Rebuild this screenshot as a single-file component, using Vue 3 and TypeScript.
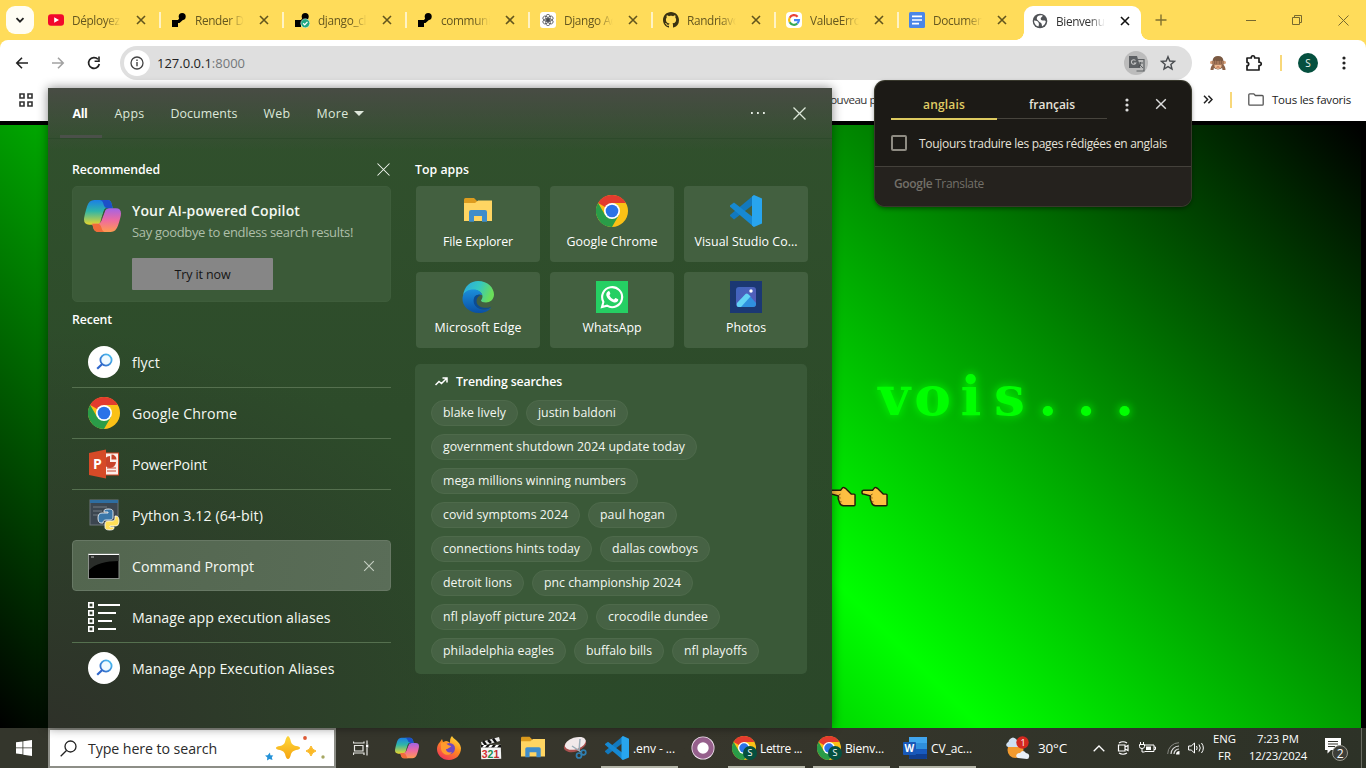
<script setup lang="ts">
interface Tab { icon: string; title: string }
interface Labeled { icon: string; label: string; width: number }
interface Chip { label: string; width: number }

// Spreads the letters of an element so its text takes the given width.
const vFit = {
  mounted(el: HTMLElement, binding: { value: number }) {
    const range = document.createRange()
    range.selectNodeContents(el)
    const natural = range.getBoundingClientRect().width
    const count = (el.textContent ?? '').trim().length
    if (natural > 0 && count > 0) {
      el.style.letterSpacing = `${((binding.value - natural) / count).toFixed(3)}px`
    }
  },
}

const tabs: Tab[] = [
  { icon: 'youtube', title: 'Déployez' },
  { icon: 'render', title: 'Render Da' },
  { icon: 'renderok', title: 'django_cl' },
  { icon: 'render', title: 'communit' },
  { icon: 'openai', title: 'Django Ad' },
  { icon: 'github', title: 'Randriavo' },
  { icon: 'google', title: 'ValueError' },
  { icon: 'gdocs', title: 'Document' },
]

const filters: Chip[] = [
  { label: 'All', width: 15 },
  { label: 'Apps', width: 30 },
  { label: 'Documents', width: 67 },
  { label: 'Web', width: 27 },
  { label: 'More', width: 32 },
]

const recents: Labeled[] = [
  { icon: 'find', label: 'flyct', width: 28 },
  { icon: 'chrome', label: 'Google Chrome', width: 105 },
  { icon: 'powerpoint', label: 'PowerPoint', width: 75 },
  { icon: 'python', label: 'Python 3.12 (64-bit)', width: 131 },
  { icon: 'cmd', label: 'Command Prompt', width: 122 },
  { icon: 'aliases', label: 'Manage app execution aliases', width: 198.5 },
  { icon: 'find', label: 'Manage App Execution Aliases', width: 202.5 },
]

const apps: Labeled[] = [
  { icon: 'folder', label: 'File Explorer', width: 70 },
  { icon: 'chrome', label: 'Google Chrome', width: 91 },
  { icon: 'vscode', label: 'Visual Studio Co...', width: 103 },
  { icon: 'edge', label: 'Microsoft Edge', width: 87 },
  { icon: 'whatsapp', label: 'WhatsApp', width: 59 },
  { icon: 'photos', label: 'Photos', width: 40 },
]

const trends: Chip[][] = [
  [{ label: 'blake lively', width: 63 }, { label: 'justin baldoni', width: 78 }],
  [{ label: 'government shutdown 2024 update today', width: 242 }],
  [{ label: 'mega millions winning numbers', width: 183 }],
  [{ label: 'covid symptoms 2024', width: 125 }, { label: 'paul hogan', width: 65 }],
  [{ label: 'connections hints today', width: 137 }, { label: 'dallas cowboys', width: 86 }],
  [{ label: 'detroit lions', width: 69 }, { label: 'pnc championship 2024', width: 137 }],
  [{ label: 'nfl playoff picture 2024', width: 133 }, { label: 'crocodile dundee', width: 100 }],
  [{ label: 'philadelphia eagles', width: 111 }, { label: 'buffalo bills', width: 66 }, { label: 'nfl playoffs', width: 63 }],
]

const pinned = ['copilot', 'firefox', 'clapper', 'folder', 'snip']
const headline = 'vois...'.split('')
</script>

<template>
  <div class="screen">
    <svg class="defs" width="0" height="0">
      <defs>
        <linearGradient id="gA" x1="0" y1="0" x2="0" y2="1"><stop offset="0" stop-color="#1b7fe6" /><stop offset=".45" stop-color="#2fb5a8" /><stop offset="1" stop-color="#e8d52c" /></linearGradient>
        <linearGradient id="gB" x1="0" y1="0" x2="0" y2="1"><stop offset="0" stop-color="#a263e6" /><stop offset=".5" stop-color="#ee6aa0" /><stop offset="1" stop-color="#ff9a50" /></linearGradient>
        <linearGradient id="gEdge" x1="0" y1="0" x2="1" y2=".3"><stop offset="0" stop-color="#2aa6e0" /><stop offset=".55" stop-color="#35c8c0" /><stop offset="1" stop-color="#6ade5a" /></linearGradient>
        <linearGradient id="gEdge2" x1="0" y1="0" x2="0" y2="1"><stop offset="0" stop-color="#1b8fdc" /><stop offset="1" stop-color="#0a50a4" /></linearGradient>
        <linearGradient id="gFind" x1="1" y1="0" x2="0" y2="1"><stop offset="0" stop-color="#4cc4f4" /><stop offset="1" stop-color="#2f5fc4" /></linearGradient>
        <linearGradient id="gFox" x1=".8" y1="0" x2=".2" y2="1"><stop offset="0" stop-color="#ffe03c" /><stop offset=".45" stop-color="#ff8a20" /><stop offset="1" stop-color="#f0305c" /></linearGradient>
        <linearGradient id="gPhoto" x1="0" y1="0" x2="1" y2="1"><stop offset="0" stop-color="#3f66bf" /><stop offset="1" stop-color="#5a5bb8" /></linearGradient>
        <linearGradient id="gStar" x1="0" y1="0" x2="0" y2="1"><stop offset="0" stop-color="#ffd93b" /><stop offset="1" stop-color="#f5a410" /></linearGradient>
      </defs>
      <symbol id="youtube" viewBox="0 0 16 16"><rect y="2.200" width="16" height="11.600" rx="3" fill="#f2082c" /><path d="M6.200 5.300v5.400L11 8z" fill="#fff" /></symbol>
      <symbol id="render" viewBox="0 0 16 16"><path d="M1 8h6v7H1zM7 8l3-4 3 3-4.500 4H7z" /><circle cx="11.200" cy="4.500" r="3.500" /></symbol>
      <symbol id="renderok" viewBox="0 0 16 16"><path d="M1 8h6v7H1zM7 8l3-4 3 3-4.500 4H7z" /><circle cx="11.200" cy="4.500" r="3.500" /><circle cx="11.300" cy="11.300" r="4.500" fill="#22a884" stroke="#fff" stroke-width=".5" /><path d="M9.200 11.300l1.500 1.600 2.800-3" fill="none" stroke="#fff" stroke-width="1.300" /></symbol>
      <symbol id="openai" viewBox="0 0 16 16"><rect width="16" height="16" rx="3" fill="#fff" /><g fill="none" stroke="#3b3e45" stroke-width=".7"><ellipse cx="8" cy="5.600" rx="2.300" ry="3.300" /><ellipse cx="8" cy="5.600" rx="2.300" ry="3.300" transform="rotate(60 8 8)" /><ellipse cx="8" cy="5.600" rx="2.300" ry="3.300" transform="rotate(120 8 8)" /><ellipse cx="8" cy="5.600" rx="2.300" ry="3.300" transform="rotate(180 8 8)" /><ellipse cx="8" cy="5.600" rx="2.300" ry="3.300" transform="rotate(240 8 8)" /><ellipse cx="8" cy="5.600" rx="2.300" ry="3.300" transform="rotate(300 8 8)" /></g></symbol>
      <symbol id="github" viewBox="0 0 16 16"><path fill="#3a3212" d="M8 0C3.580 0 0 3.580 0 8c0 3.540 2.290 6.530 5.470 7.590.4.070.55-.17.55-.38 0-.19-.01-.82-.01-1.490-2.010.37-2.530-.49-2.690-.94-.09-.23-.48-.94-.82-1.130-.28-.15-.68-.52-.01-.53.63-.01 1.080.58 1.230.82.72 1.210 1.870.87 2.330.66.07-.52.28-.87.51-1.070-1.780-.2-3.640-.89-3.640-3.950 0-.87.31-1.590.82-2.150-.08-.2-.36-1.020.08-2.120 0 0 .67-.21 2.200.82.64-.18 1.320-.27 2-.27s1.360.09 2 .27c1.530-1.040 2.200-.82 2.200-.82.44 1.100.16 1.920.08 2.120.51.56.82 1.270.82 2.150 0 3.070-1.870 3.750-3.650 3.950.29.25.54.73.54 1.480 0 1.070-.01 1.930-.01 2.200 0 .21.15.46.55.38A8.010 8.010 0 0016 8c0-4.420-3.580-8-8-8z" /></symbol>
      <symbol id="google" viewBox="0 0 16 16"><rect width="16" height="16" rx="4" fill="#fff" /><g fill="none" stroke-width="2.200"><path d="M11.600 4.700A4.900 4.900 0 0 0 3.700 5.700" stroke="#ea4335" /><path d="M3.700 5.700a4.900 4.900 0 0 0 0 4.600" stroke="#fbbc05" /><path d="M3.700 10.300a4.900 4.900 0 0 0 7.600 1.200" stroke="#34a853" /><path d="M11.300 11.500A4.900 4.900 0 0 0 12.900 8.200H8" stroke="#4285f4" /></g></symbol>
      <symbol id="gdocs" viewBox="0 0 16 16"><rect width="16" height="16" rx="1.500" fill="#4a86e8" /><path d="M3 4.300h10M3 8h10M3 11.700h7" stroke="#fff" stroke-width="1.700" /></symbol>
      <symbol id="globe" viewBox="0 0 16 16"><circle cx="8" cy="8" r="7.300" fill="#505357" /><path d="M2 7.600c2.600 0 3.900.8 4.600 2.100.6 1.200.3 2.500-.2 3.800C3.600 12.900 2 10.500 2 7.600zM6 3c1.300-.9 3.300-1.100 4.700-.4-.2 1.800-1.800 1.500-2 3-.1 1.500 1 2.200 2.600 1.900 1.400-.3 2.400.1 2.500 1.100-.4 2.200-1.800 4-3.800 4.800-.1-2-.3-3.200-1.700-3.900C6.500 8.500 6.400 7.500 5 6.600 4.500 5.200 5 3.700 6 3z" fill="#fff" /></symbol>
      <symbol id="chrome" viewBox="0 0 32 32"><circle cx="16" cy="16" r="16" fill="#fbc116" /><path d="M16 16L2.140 8A16 16 0 0 1 29.860 8z" fill="#e33b2e" /><path d="M2.140 8A16 16 0 0 0 16 32l6.900-12H9.100z" fill="#2a9c48" /><path d="M29.860 8H16l6.900 12z" fill="#fbc116" /><circle cx="16" cy="16" r="8" fill="#fff" /><circle cx="16" cy="16" r="6.300" fill="#2a73e8" /></symbol>
      <symbol id="folder" viewBox="0 0 28 28"><path d="M0 2.500Q0 1 1.500 1H10l3 3v6H0z" fill="#dd9c1e" /><path d="M0 6h11l3-2.500h14V24H0z" fill="#ffd562" /><path d="M5 24.800V15q0-2 2-2h14q2 0 2 2v9.800h-5V19h-8v5.800z" fill="#3f8dcb" /></symbol>
      <symbol id="vscode" viewBox="0 0 32 32"><path d="M24 0v9L4 24.500 0 21v-1z" fill="#1279be" /><path d="M24 32v-9L4 7.500 0 10.500v1.200z" fill="#1689d3" /><path d="M24 0l8 3.500v25L24 32l-2-1.500v-29z" fill="#28a5ee" /></symbol>
      <symbol id="edge" viewBox="0 0 32 32"><path d="M1 15C2 5 9 0 16 0c10 0 16 7 16 13.500 0 5-4 8-8 8-3 0-5-1-5-2 0-.8 1.500-1.500 1.500-4C20.500 12 17 9 12 9 6 9 2 12 1 15z" fill="url(#gEdge)" /><path d="M.5 17C1 11 6 8.500 11.500 8.500c5 0 8 2.500 8.800 5.500-5-2-9 1.500-8 7 .8 5 6 8 11 7.500 2.500-.3 4.500-1 6-2C26.500 30.500 22 32 17 32 7 32 0 25 .5 17z" fill="url(#gEdge2)" /><path d="M12 17c-2 6 3 12 11 11.500 3-.3 5-1.500 6.500-3-4 2.500-15 2-15-5.500 0-3 2-5 4-6-3-.7-5.500.5-6.500 3z" fill="#0c4b91" /></symbol>
      <symbol id="whatsapp" viewBox="0 0 32 32"><rect width="32" height="32" fill="#25cf63" /><path d="M6 26l1.400-5A10 10 0 1 1 11 24.700z" fill="none" stroke="#fff" stroke-width="2.100" /><path d="M12.300 10.200c.9-.5 1.300.2 2 2.300.2.800-.9 1.500-.8 1.900.9 1.900 2.300 3.200 4.300 4 .7 0 1.200-1.500 1.800-1.400l2.600 1.300c.5 2.300-1.900 3.600-4.200 3.100-4-1.100-6.500-3.700-7.600-6.700-.5-1.900.4-3.700 1.900-4.500z" fill="#fff" /></symbol>
      <symbol id="photos" viewBox="0 0 32 32"><rect width="32" height="32" fill="#1b3873" /><rect x="6" y="6" width="20" height="20" rx="3" fill="url(#gPhoto)" /><path d="M7 25l9-11q1.500-1.500 3 0l7 8v1q0 3-3 3H9q-1.500 0-2-1z" fill="#2f90df" /><path d="M7 22l8.500-9q1.500-1 3 .5l2 2L11 26H9q-3 0-2-4z" fill="#63d3f5" /><circle cx="21" cy="10" r="1.700" fill="#fff" /></symbol>
      <symbol id="find" viewBox="0 0 32 32"><circle cx="16" cy="16" r="16" fill="#fff" /><circle cx="18" cy="14" r="5.600" fill="#f0faff" stroke="url(#gFind)" stroke-width="1.800" /><path d="M14 18.200L9.200 22.800" stroke="#2f67cc" stroke-width="2.200" /></symbol>
      <symbol id="powerpoint" viewBox="0 0 32 32"><rect x="16" y="5" width="14.500" height="22" fill="#fbeeea" stroke="#d04423" /><path d="M22 8v6h6a6 6 0 1 1-6-6z" fill="#c8432a" /><path d="M23.500 6.500a5 5 0 0 1 5 5h-5z" fill="#c8432a" /><path d="M19 20h9M19 23h9" stroke="#c8432a" stroke-width="1.200" /><path d="M1 5l17-3.500v29L1 27z" fill="#d64a27" /><text x="5" y="21" class="pp-letter">P</text></symbol>
      <symbol id="python" viewBox="0 0 32 32"><rect x="2" y="1" width="28" height="25" fill="#3c4650" stroke="#6d747b" /><rect x="2" y="1" width="28" height="3" fill="#2e6da0" /><path d="M5 8h14M5 12h9M5 16h8" stroke="#8a9299" stroke-width=".7" /><path d="M20 10c4 0 5 1 5 3v5c0 2-1 3-3 3h-4c-2 0-3 1-3 3h-2c-2 0-3-2-3-5s1-5 4-5h6v-1h-4v-1c0-1 1-2 4-2z" fill="#3b77a8" stroke="#fff" stroke-width=".8" /><path d="M22 31c-4 0-5-1-5-3v-3c0-2 1-3 3-3h4c2 0 3-1 3-3v-2h1c2 0 3 2 3 5s-1 5-4 5h-5v1h4v1c0 1-1 2-4 2z" fill="#ffdf58" stroke="#fff" stroke-width=".8" /></symbol>
      <symbol id="cmd" viewBox="0 0 32 32"><rect x=".5" y="4" width="30.500" height="24.500" fill="#000" stroke="#8a908a" /><path d="M1 5h29.500v6C18 11 7 14 1 20z" fill="#2a2d2a" /><path d="M.5 4.500h30.500" stroke="#fff" /><path d="M3 7h3" stroke="#bbb" /></symbol>
      <symbol id="aliases" viewBox="0 0 32 32"><g fill="none" stroke="#fff" stroke-width="1.600"><rect x=".8" y="1.800" width="4.400" height="4.400" /><rect x=".8" y="9.800" width="4.400" height="4.400" /><rect x=".8" y="17.800" width="4.400" height="4.400" /><rect x=".8" y="25.800" width="4.400" height="4.400" /><path d="M10 4h22M10 12h18M10 20h14M10 28h18" stroke-width="2" /></g></symbol>
      <symbol id="copilot" viewBox="0 0 36 33"><path d="M10 1h13q3 0 4 4l1 4h-4q-4 0-5 4l-3 9q-1 3-5 3H5q-5 0-5-5 0-3 3-13 2-6 7-6z" fill="url(#gA)" /><path d="M15 1h8q3 0 4 4l1 4h-5q-3 0-4-4t-4-4z" fill="#1d50c8" /><path d="M26 32H14q-4 0-5-4l-1-4h4q4 0 5-3l3-8q1-4 5-4h6q5 0 5 5 0 3-3 12-2 6-7 6z" fill="url(#gB)" /><path d="M20 32h-7q-3 0-4-4l-1-4h5q3 0 4 4t3 4z" fill="#f16b3b" /><path d="M18 17l2.500-6.500Q21.500 9 24 9h-3q-1.500 1-2 3l-3 9.500z" fill="#2f512e" /></symbol>
      <symbol id="firefox" viewBox="0 0 24 24"><path d="M3 6l2-3 1 3 3-1c2 0 3 1 4 2 0-3 0-5 2-7 1 3 8 5 9 12 0 7-5 12-12 12S0 19 0 13c0-3 1-5 3-7z" fill="url(#gFox)" /><circle cx="12.500" cy="12.500" r="5.500" fill="#7048c0" /><path d="M4 7c3-1 5 0 7 2 2 .5 3 1 3 2-2 0-2 2-5 2 0 3 3 4 6 3-3 5-10 3-11-3z" fill="#ff9a2e" /></symbol>
      <symbol id="clapper" viewBox="0 0 24 24"><path d="M2 6L20 1l1 4L3 10z" fill="#eee" /><path d="M4 5l3 4M9 4l3 3M14 2.500l3 4" stroke="#111" stroke-width="2.500" /><rect x="2" y="9" width="20" height="14" fill="#f4f4f4" transform="rotate(-2 12 16)" /><path d="M2 9h20v2.500H2z" fill="#111" /><path d="M5 9h3l-2 2.500H3zM11 9h3l-2 2.500H9zM17 9h3l-2 2.500h-3z" fill="#fff" /><text x="2.700" y="21.500" class="clap"><tspan fill="#d62f2f">3</tspan><tspan fill="#1b8d4d">2</tspan><tspan fill="#c22b2b">1</tspan></text></symbol>
      <symbol id="snip" viewBox="0 0 24 24"><ellipse cx="12" cy="9" rx="11.500" ry="6.500" fill="#a9504e" transform="rotate(-18 12 9)" /><ellipse cx="12.500" cy="7.500" rx="10.800" ry="5.800" fill="#f1e9ea" transform="rotate(-18 12 8)" /><path d="M17 3l-1 12M9 10l9 6" stroke="#9badb8" stroke-width="1.500" /><g fill="none" stroke="#2f7fb2" stroke-width="1.700"><circle cx="16" cy="19.500" r="2.500" /><circle cx="20.500" cy="16.500" r="2.300" /></g></symbol>
      <symbol id="word" viewBox="0 0 24 24"><rect x="6" y="1" width="18" height="22" rx="1.500" fill="#2f8fdb" /><path d="M6 1h18v6H6z" fill="#41a5ee" /><path d="M6 13h18v5H6z" fill="#185abd" /><path d="M6 18h18v4q0 1-1 1H7q-1 0-1-1z" fill="#103f91" /><rect y="6" width="13" height="13" rx="1" fill="#1858b8" /><text x="1.500" y="16.300" class="word-letter">W</text></symbol>
      <symbol id="x" viewBox="0 0 10 10"><path d="M1 1l8 8M9 1L1 9" fill="none" stroke="currentColor" /></symbol>
      <symbol id="hand" viewBox="0 0 28 22"><path d="M3 4h9l2-2.500Q15 .5 17 2l6 6h3q1 0 1 1v10q0 1-1 1H15q-3 0-4-3l-1-3q-1-2 0-4L3 8Q1 8 1 6t2-2z" fill="#fdbf42" stroke="#241c0a" stroke-width="1.500" stroke-linejoin="round" /><path d="M12 8l-2 1M12 12h-2M13 16h-2" stroke="#7a5410" /></symbol>
    </svg>

    <div class="tabbar">
      <div class="tab-search"><svg width="12" height="12" viewBox="0 0 12 12"><path d="M2.500 4.200L6 7.700l3.500-3.500" fill="none" stroke="#222" stroke-width="1.800" /></svg></div>
      <div v-for="(tab, i) in tabs" :key="i" class="tab" :class="{ last: i === tabs.length - 1 }">
        <svg class="favicon"><use :href="'#' + tab.icon" /></svg>
        <span class="tab-title">{{ tab.title }}</span>
        <svg class="tab-x"><use href="#x" /></svg>
      </div>
      <div class="tab active">
        <svg class="favicon"><use href="#globe" /></svg>
        <span class="tab-title">Bienvenue</span>
        <svg class="tab-x"><use href="#x" /></svg>
      </div>
      <svg class="newtab" width="12" height="12" viewBox="0 0 12 12"><path d="M6 .5v11M.5 6h11" stroke="#80702f" stroke-width="1.400" /></svg>
      <div class="winbtns">
        <svg width="10" height="10" viewBox="0 0 10 10"><path d="M0 5.500h10" stroke="#77692f" /></svg>
        <svg width="10" height="10" viewBox="0 0 10 10"><path d="M.5 2.500h7v7h-7zM2.500 2V.5h7v7H8" fill="none" stroke="#77692f" /></svg>
        <svg width="11" height="11" viewBox="0 0 11 11"><path d="M.5 .5l10 10M10.500 .5l-10 10" stroke="#77692f" /></svg>
      </div>
    </div>

    <div class="chrome-top">
      <div class="toolbar">
        <div class="nav">
          <svg viewBox="0 0 16 16"><path d="M14 8H3M8 2.800L2.800 8 8 13.200" fill="none" stroke="#222" stroke-width="1.600" /></svg>
          <svg viewBox="0 0 16 16"><path d="M2 8h11M8 2.800L13.200 8 8 13.200" fill="none" stroke="#a2a2a2" stroke-width="1.600" /></svg>
          <svg viewBox="0 0 16 16"><path d="M13.300 9A5.400 5.400 0 1 1 12 4.300" fill="none" stroke="#222" stroke-width="1.700" /><path d="M13.800 1.600V7H8.600V5.400h3.600V1.600z" fill="#222" /></svg>
        </div>
        <div class="omnibox">
          <div class="info"><svg width="14" height="14" viewBox="0 0 14 14"><circle cx="7" cy="7" r="6" fill="none" stroke="#444" stroke-width="1.300" /><path d="M7 6v4.200M7 3.500v1.400" stroke="#444" stroke-width="1.400" /></svg></div>
          <span v-fit="88" class="url">127.0.0.1<i>:8000</i></span>
          <div class="gt"><svg width="17" height="17" viewBox="0 0 17 17"><path d="M1 1h8l3.500 12H1z" fill="#5d6063" /><path d="M9 4.500h7V16H8.500" fill="none" stroke="#5d6063" stroke-width="1.200" /><path d="M10 8h5M12.500 7c0 3-1 4-2 5M11 9l4 4" stroke="#5d6063" /><path d="M7.500 5.500A2.300 2.300 0 1 0 7.800 8H5.800" fill="none" stroke="#c4c4c4" stroke-width="1.100" /></svg></div>
          <svg class="star" width="16" height="16" viewBox="0 0 16 16"><path d="M8 1.700l1.800 4.300 4.700.4-3.600 3.100 1.100 4.600L8 11.600l-4 2.500 1.100-4.600L1.500 6.400 6.200 6z" fill="none" stroke="#494c50" stroke-width="1.400" /></svg>
        </div>
        <div class="ext">
          <svg class="monkey" width="16" height="16" viewBox="0 0 16 16"><circle cx="1.800" cy="7.500" r="1.800" fill="#d9a27c" /><circle cx="14.200" cy="7.500" r="1.800" fill="#d9a27c" /><path d="M2.500 6q.5-5 5.500-5t5.500 5v4q-1 4-5.500 4.500Q3.500 14 2.500 10z" fill="#7a5942" /><path d="M4 9.500h8q0 4-4 4.500-4-.5-4-4.500z" fill="#ecb88f" /><path d="M2 6.500q3-2 6-.3 3-1.700 6 .3l-1 3.300-4.200.2L8 9l-.8 1L3 9.800z" fill="#a8785a" /><path d="M4.500 5v4M6.300 5v4M9.700 5v4M11.500 5v4" stroke="#6b4a37" stroke-width=".5" /><path d="M6.500 12.300q1.500-1 3 0" fill="none" stroke="#a34c37" stroke-width=".8" /><path d="M.5 15q0-4 2.500-5.500l1.500.5-1 5zM15.500 15q0-4-2.500-5.500l-1.500.5 1 5z" fill="#8b6248" /></svg>
          <svg class="puzzle" width="18" height="18" viewBox="0 0 18 18"><path d="M2 4h4.300c-.3-3 3.400-3 3.400 0H14v4.200c3-.2 3 3.600 0 3.400V16H2v-4.300c2.300 0 2.300-3.400 0-3.400z" fill="none" stroke="#1d1d1d" stroke-width="1.700" stroke-linejoin="round" /></svg>
          <b class="ysep"></b>
          <div class="avatar">S</div>
          <svg class="kebab" width="4" height="16" viewBox="0 0 4 16"><circle cx="2" cy="3" r="1.600" /><circle cx="2" cy="8" r="1.600" /><circle cx="2" cy="13" r="1.600" /></svg>
        </div>
      </div>
      <div class="bookmarks">
        <svg width="14" height="14" viewBox="0 0 14 14"><path d="M1 1h4v4H1zM9 1h4v4H9zM1 9h4v4H1zM9 9h4v4H9z" fill="none" stroke="#333" stroke-width="1.600" /></svg>
        <span v-fit="54" class="bm-new">Nouveau p</span>
        <div class="bm-right">
          <svg width="10" height="9" viewBox="0 0 10 9"><path d="M1 .8l3.600 3.700L1 8.200M5.400 .8L9 4.500 5.400 8.200" fill="none" stroke="#222" stroke-width="1.500" /></svg>
          <b class="ysep"></b>
          <svg class="bm-folder" width="16" height="13" viewBox="0 0 16 13"><path d="M.8 11.200V1.800q0-1 1-1h4l1.600 1.700h6.800q1 0 1 1v7.700q0 1-1 1H1.800q-1 0-1-1z" fill="none" stroke="#555" stroke-width="1.300" /></svg>
          <span v-fit="79">Tous les favoris</span>
        </div>
      </div>
    </div>

    <div class="page">
      <div class="gradient">
        <div class="vois"><span v-for="(ch, i) in headline" :key="i">{{ ch }}</span></div>
        <div class="hands"><svg><use href="#hand" /></svg><svg><use href="#hand" /></svg></div>
      </div>
    </div>

    <div class="translate">
      <div class="t-top">
        <div class="t-tab on"><span v-fit="42">anglais</span></div>
        <div class="t-tab"><span v-fit="46">français</span></div>
        <svg class="t-dots" width="4" height="14" viewBox="0 0 4 14"><circle cx="2" cy="2" r="1.600" /><circle cx="2" cy="7" r="1.600" /><circle cx="2" cy="12" r="1.600" /></svg>
        <svg class="t-x" width="12" height="12"><use href="#x" /></svg>
      </div>
      <div class="t-check"><i></i><span v-fit="248">Toujours traduire les pages rédigées en anglais</span></div>
      <div class="t-foot"><span v-fit="90"><b>Google</b> Translate</span></div>
    </div>

    <div class="panel">
      <div class="p-head">
        <span v-for="(f, i) in filters" :key="f.label" class="filter" :class="{ on: i === 0 }"><span v-fit="f.width">{{ f.label }}</span></span>
        <svg class="caret" width="10" height="5" viewBox="0 0 10 5"><path d="M0 0h10L5 5z" fill="#dfe8dc" /></svg>
        <svg class="more" width="16" height="2" viewBox="0 0 16 2"><path d="M1 0h1.800v2H1zM7 0h1.800v2H7zM13 0h1.800v2H13z" fill="#e4ebe2" /></svg>
        <svg class="close" width="15" height="15"><use href="#x" /></svg>
      </div>
      <div class="p-body">
        <div class="left">
          <div class="h-row"><span v-fit="88" class="h">Recommended</span><svg class="thin" width="15" height="15"><use href="#x" /></svg></div>
          <div class="card">
            <svg class="cp"><use href="#copilot" /></svg>
            <div class="card-text">
              <span v-fit="168" class="ct">Your AI-powered Copilot</span>
              <span v-fit="221" class="cs">Say goodbye to endless search results!</span>
              <div class="try"><span v-fit="56">Try it now</span></div>
            </div>
          </div>
          <div class="h-row recent"><span v-fit="40" class="h">Recent</span></div>
          <div v-for="(r, i) in recents" :key="i" class="item" :class="{ sel: i === 4, plain: i === 3 || i === 6 }">
            <svg class="i32"><use :href="'#' + r.icon" /></svg>
            <span v-fit="r.width">{{ r.label }}</span>
            <svg v-if="i === 4" class="item-x" width="12" height="12"><use href="#x" /></svg>
          </div>
        </div>
        <div class="right">
          <div class="h-row"><span v-fit="54" class="h">Top apps</span></div>
          <div class="tiles">
            <div v-for="a in apps" :key="a.label" class="tile">
              <svg class="i32" :class="a.icon"><use :href="'#' + a.icon" /></svg>
              <span v-fit="a.width">{{ a.label }}</span>
            </div>
          </div>
          <div class="trend">
            <div class="trend-h">
              <svg width="13" height="9" viewBox="0 0 13 9"><path d="M.5 8L4 4.500l2.500 2L11.500 1.500M7.500 1H12v4.500" fill="none" stroke="#fff" stroke-width="1.500" /></svg>
              <span v-fit="106" class="h">Trending searches</span>
            </div>
            <div v-for="(row, i) in trends" :key="i" class="chips">
              <div v-for="c in row" :key="c.label" class="chip"><span v-fit="c.width">{{ c.label }}</span></div>
            </div>
          </div>
        </div>
      </div>
    </div>

    <div class="taskbar">
      <div class="start"><svg width="16" height="16" viewBox="0 0 16 16"><path d="M0 2.300l6.500-.9v6H0zM7.300 1.200L16 0v7.400H7.300zM0 8.300h6.500v6L0 13.500zM7.300 8.300H16V16l-8.700-1.300z" fill="#fff" /></svg></div>
      <div class="search">
        <svg width="17" height="17" viewBox="0 0 17 17"><circle cx="10.500" cy="6.500" r="5.500" fill="none" stroke="#222" stroke-width="1.300" /><path d="M6.500 10.500L.7 16.300" stroke="#222" stroke-width="1.300" /></svg>
        <span v-fit="129">Type here to search</span>
        <svg class="sparkle" width="62" height="26" viewBox="0 0 62 26"><path d="M24 1q2 1 3 6 1 3 5 4 4 .5 4 2t-4 2q-4 1-5 4-1 5-3 5t-3-5q-1-3-5-4-4-.5-4-2t4-2q4-1 5-4 1-5 3-6z" fill="url(#gStar)" /><path d="M47 11q1 4 5 5-4 1-5 5-1-4-5-5 4-1 5-5z" fill="#fbb927" stroke="#fbb927" /><path d="M6 17.500l.3 2.700 3 .3-1.500 1.800.7 2.800-3-1-2.500 1.500.3-3L1 20.500l2.700-.2z" fill="#2492d8" /><circle cx="41" cy="3" r="1.900" fill="#e05b36" /><circle cx="59" cy="22" r="1.700" fill="#a6a763" /></svg>
      </div>
      <div class="slot tv"><svg width="16" height="16" viewBox="0 0 16 16"><path d="M.5 1.500V3H11V1.500M1.500 5.500h8.500v5.500H1.500zM.5 15v-2H11v2M14 .5V4M14 8v7.500" fill="none" stroke="#e8e8e4" stroke-width="1.200" /><path d="M13 4.500h2.300v3H13z" fill="#fff" /></svg></div>
      <div v-for="p in pinned" :key="p" class="slot"><svg class="i24"><use :href="'#' + p" /></svg></div>
      <div class="run first"><svg class="i24"><use href="#vscode" /></svg><span v-fit="42">.env - ...</span></div>
      <div class="slot circ"><svg width="24" height="24" viewBox="0 0 24 24"><circle cx="12" cy="12" r="11.500" fill="#f6e9f5" /><circle cx="12" cy="12" r="8.200" fill="#fff" stroke="#96608c" stroke-width="5" /></svg></div>
      <div class="run"><svg class="i24"><use href="#chrome" /></svg><em>S</em><span v-fit="42">Lettre ...</span></div>
      <div class="run second"><svg class="i24"><use href="#chrome" /></svg><em>S</em><span v-fit="39">Bienv...</span></div>
      <div class="run third"><svg class="i24"><use href="#word" /></svg><span v-fit="41">CV_ac...</span></div>
      <div class="weather">
        <svg width="24" height="24" viewBox="0 0 24 24"><circle cx="9.500" cy="14" r="8" fill="#f29a2e" /><path d="M2 11q-3-1-1-4 2-1 2-3 4-5 8 0 5 0 4 5 0 2-3 2z" fill="#cfe0f2" /><path d="M12 22q-3-1-1-4 1-1 3-1 3-4 6 0 4 1 3 4 0 2-2 2z" fill="#eaf0f7" /><circle cx="16.500" cy="6.500" r="6.200" fill="#d3281f" /><text x="14.500" y="10" class="badge-n">1</text></svg>
        <span v-fit="29">30°C</span>
      </div>
      <div class="tray">
        <svg width="12" height="7" viewBox="0 0 12 7"><path d="M.7 6.300L6 1l5.300 5.300" fill="none" stroke="#fff" stroke-width="1.300" /></svg>
        <svg class="meet" width="12" height="16" viewBox="0 0 12 16"><path d="M2 3Q6 .5 10 3M2 13q4 2.500 8 0M1.500 5H8v6H1.500zM8 7l3-1.500v5L8 9" fill="none" stroke="#fff" stroke-width="1.200" /></svg>
        <svg class="batt" width="17" height="12" viewBox="0 0 17 12"><path d="M5.500 3H15v6.500H5.500M15 5h1.500v2.500H15M1.500 0v2M4.500 0v2M.5 2.500h5v2q0 2-2.500 2t-2.500-2zM3 6v4h2.500" fill="none" stroke="#fff" /><path d="M7 4.500h5V8H7z" fill="#fff" /></svg>
        <svg class="wifi" width="13" height="13" viewBox="0 0 13 13"><g fill="none"><path d="M.7 12A11.300 11.300 0 0 1 12 .7" stroke="#888983" /><path d="M4 12a8 8 0 0 1 8-8M7 12a5 5 0 0 1 5-5" stroke="#ddd" stroke-width="1.200" /></g><path d="M9 12.500a3.500 3.500 0 0 1 3.500-3.500v3.500z" fill="#fff" /></svg>
        <svg class="vol" width="17" height="12" viewBox="0 0 17 12"><path d="M.6 4h2.600L6.500 1v10L3.200 8H.6zM8.500 4q1.300 2 0 4M11 2.500q2.500 3.500 0 7M13.500 1q3.700 5 0 10" fill="none" stroke="#fff" /></svg>
      </div>
      <div class="stack lang"><span v-fit="23">ENG</span><span v-fit="13">FR</span></div>
      <div class="stack clock"><span v-fit="42">7:23 PM</span><span v-fit="58">12/23/2024</span></div>
      <svg class="notif" width="26" height="26" viewBox="0 0 26 26"><path d="M1 1h16v12H7l-3.500 3.500V13H1z" fill="#fff" /><path d="M4 4.500h10M4 7h10M4 9.500h7" stroke="#34352d" stroke-width="1.100" /><circle cx="16" cy="16" r="7.500" fill="#3d3e38" stroke="#99998f" /><text x="12.800" y="20.500" class="notif-n">2</text></svg>
      <b class="desk"></b>
    </div>
  </div>
</template>

<style>
body { margin: 0; overflow: hidden; }
</style>

<style scoped>
.screen { position: relative; width: 1366px; height: 768px; overflow: hidden; display: flex; flex-direction: column; font-family: "Open Sans", "Noto Sans", sans-serif; font-size: 12px; color: #222; white-space: nowrap; }
.screen svg { display: block; flex: none; }
.defs { position: absolute; }
.tabbar { height: 40px; background: #ffdc5a; display: flex; align-items: center; }
.tab-search { width: 28px; height: 28px; margin: 0 4px 0 6px; border-radius: 9px; background: #fffdf4; display: flex; align-items: center; justify-content: center; }
.tab { width: 123px; height: 34px; box-sizing: border-box; padding-left: 10px; display: flex; align-items: center; position: relative; color: #65571f; }
.tab::after { content: ""; width: 2px; height: 16px; background: #fff3c4; margin-left: 13px; }
.tab.last::after { visibility: hidden; }
.favicon { width: 16px; height: 16px; }
.tab-title { margin-left: 8px; width: 49px; margin-right: -1px; overflow: hidden; letter-spacing: -0.35px; mask-image: linear-gradient(90deg, #000 68%, transparent); font-size: 11.800px; }
.tab-x { width: 10px; height: 10px; margin-left: 16px; stroke-width: 1.600; color: #62551d; }
.tab.active { width: 117px; height: 34px; margin-top: 6px; margin-left: 2px; padding: 0 0 5px 8px; background: #fff; border-radius: 9px 9px 0 0; color: #333; }
.tab.active::before { content: ""; position: absolute; left: -8px; right: -8px; bottom: 0; height: 8px; background: radial-gradient(circle at 0 0, transparent 7.5px, #fff 8px) left / 8px 8px no-repeat, radial-gradient(circle at 100% 0, transparent 7.5px, #fff 8px) right / 8px 8px no-repeat; }
.tab.active::after { display: none; }
.tab.active .tab-x { color: #111; }
.newtab { margin-left: 14px; }
.winbtns { margin-left: auto; width: 103px; padding-right: 17px; display: flex; justify-content: space-between; align-items: center; }
.chrome-top { background: #ffdc5a; height: 81px; }
.toolbar { height: 46px; background: #fff; border-radius: 8px 8px 0 0; display: flex; align-items: center; }
.nav { width: 120px; display: flex; gap: 20px; padding-left: 14px; box-sizing: border-box; }
.nav svg { width: 16px; height: 16px; }
.omnibox { width: 1072px; height: 34px; border-radius: 17px; background: #dfdfdf; display: flex; align-items: center; box-sizing: border-box; padding: 0 16px 0 4px; }
.info { width: 26px; height: 26px; border-radius: 50%; background: #fff; display: flex; align-items: center; justify-content: center; }
.url { margin-left: 7px; font-size: 13px; }
.url i { font-style: normal; color: #73777a; }
.gt { margin-left: auto; width: 24px; height: 24px; border-radius: 50%; background: #bcbcbc; display: flex; align-items: center; justify-content: center; }
.star { margin-left: 12px; }
.ext { display: flex; align-items: center; }
.monkey { margin-left: 18px; }
.puzzle { margin-left: 19px; }
.ysep { width: 2px; height: 16px; background: #f8d87a; }
.ext .ysep { margin-left: 17px; }
.avatar { margin-left: 16px; width: 20px; height: 20px; border-radius: 50%; background: #05503f; color: #e8f4ee; font-size: 10px; line-height: 20px; text-align: center; }
.kebab { margin-left: 24px; fill: #222; }
.bookmarks { height: 35px; background: #fff; display: flex; align-items: center; padding: 0 15px 0 19px; }
.bookmarks > svg { margin-bottom: 7px; margin-top: -1px; }
.bookmarks span { font-size: 11.500px; }
.bm-new { margin-left: 789px; margin-bottom: 8px; color: #333; }
.bm-right { margin-left: auto; margin-bottom: 8px; display: flex; align-items: center; }
.bm-right .ysep { margin: 0 16px 0 17px; }
.bm-right span { margin-left: 8px; }
.page { height: 607px; background: #000; padding: 4px 5px 0 0; box-sizing: border-box; }
.gradient { height: 603px; background: linear-gradient(45deg, #000, #0f0, #000); display: flex; flex-direction: column; }
.vois { margin: 235px 0 0 875px; height: 72px; display: flex; font: bold 55px/72px "DejaVu Serif", serif; color: #0f0; text-shadow: 0 0 10px #0f0; }
.vois span { width: 38.400px; display: flex; justify-content: center; }
.hands { margin: 54px 0 0 829px; display: flex; gap: 5px; }
.hands svg { width: 27px; height: 22px; }
.translate { position: absolute; left: 875px; top: 81px; width: 316px; height: 125px; border-radius: 10px; background: #1c1a16; box-shadow: 0 0 0 1px #38382c, 0 2px 5px #0008; overflow: hidden; color: #e6e2d9; }
.t-top { display: flex; height: 39px; padding-left: 16px; box-sizing: border-box; }
.t-tab { width: 106px; height: 38px; line-height: 47px; text-align: center; font-size: 12px; font-weight: 600; border-bottom: 1px solid #47443d; box-sizing: border-box; }
.t-tab + .t-tab { width: 110px; }
.t-tab.on { color: #e0cd65; border-bottom: 2px solid #ddca60; height: 39px; }
.t-dots { margin: 17px 0 0 18px; fill: #ddd; }
.t-x { margin: 17px 0 0 26px; color: #ddd; stroke-width: 1.200; }
.t-check { height: 46px; display: flex; align-items: center; padding-left: 16px; font-size: 12px; }
.t-check i { width: 12px; height: 12px; border: 2px solid #8e8b82; border-radius: 2px; }
.t-check span { margin-left: 12px; }
.t-foot { border-top: 1px solid #44413b; background: #25221e; height: 39px; line-height: 34px; padding-left: 19px; color: #737069; font-size: 12px; }
.t-foot b { font-weight: 600; }
.panel { position: absolute; left: 48px; top: 88px; width: 784px; height: 640px; color: #f4f8f2; background: linear-gradient(180deg, #484c44 0, #48514400 62px), radial-gradient(ellipse at 0 100%, #2e3129, #2e312900 44%), radial-gradient(ellipse at 100% 100%, #2b4729, #2b472900 40%), linear-gradient(180deg, #31512d, #2d4b2a 50%, #2b4b29); box-shadow: 0 0 10px #0007; }
.p-head { height: 51px; display: flex; align-items: center; padding-left: 12px; border-bottom: 1px solid #2d4a2b; font-size: 12.400px; box-sizing: border-box; color: #dde8da; }
.filter { height: 50px; line-height: 51px; box-sizing: border-box; padding: 0 13px; }
.filter.on { font-weight: 700; color: #fff; border-bottom: 3px solid #4b504a; padding: 0 14px 0 12.500px; }
.caret { margin-left: -8px; }
.more { margin-left: auto; }
.close { margin: 0 25px 0 26px; stroke-width: .850; }
.thin { stroke-width: .700; }
.p-body { display: flex; padding: 0 24px; }
.left { width: 319px; }
.right { width: 392px; margin-left: 24px; }
.h-row { height: 47px; box-sizing: border-box; padding-top: 14px; display: flex; align-items: center; justify-content: space-between; }
.h { font-size: 12.300px; font-weight: 600; color: #fff; }
.card { height: 116px; box-sizing: border-box; border-radius: 5px; background: #3b5a38; border: 1px solid #3e5d3b; display: flex; padding: 12px 11px; }
.cp { width: 37px; height: 34px; }
.card-text { margin-left: 11px; display: flex; flex-direction: column; }
.ct { font-size: 14px; font-weight: 600; line-height: 23px; }
.cs { font-size: 13px; line-height: 20px; color: #aebfa9; }
.try { margin-top: 16px; width: 141px; height: 32px; background: #868686; color: #151515; font-size: 12.500px; line-height: 33px; text-align: center; border-radius: 1px; }
.h-row.recent { height: 35px; padding: 0 0 1px; }
.item { height: 51px; box-sizing: border-box; border-bottom: 1px solid #55704f; padding: 0 16px; display: flex; align-items: center; font-size: 14.200px; }
.item.plain { border-color: transparent; }
.item.sel { background: linear-gradient(100deg, #53664f, #5a6d58); border: 1px solid #677864; border-radius: 4px; padding: 0 15px; margin: -1px 0 1px; }
.item > span { margin-left: 12px; padding-top: 1px; }
.item-x { margin-left: auto; color: #c5cfc2; stroke-width: .900; }
.i32 { width: 32px; height: 32px; }
.tiles { display: grid; grid-template-columns: repeat(3, 124px); gap: 10px; margin-left: 1px; }
.tile { height: 76px; box-sizing: border-box; padding-top: 9px; background: #436040; border-radius: 4px; display: flex; flex-direction: column; align-items: center; font-size: 12.400px; color: #fff; }
.tile span { line-height: 18px; margin-top: 6px; }
.tile .folder { width: 28px; height: 28px; margin: 2px 0; }
.trend { margin-top: 16px; height: 310px; box-sizing: border-box; padding: 9px 16px 0; background: #3a5938; border-radius: 5px; }
.trend-h { height: 17px; display: flex; align-items: center; padding-left: 4px; gap: 8px; margin-bottom: 10px; }
.chips { display: flex; gap: 8px; margin-bottom: 8px; }
.chip { height: 26px; line-height: 24px; box-sizing: border-box; border: 1px solid #4e6a4b; border-radius: 13px; padding: 0 11px; background: #466244; font-size: 12.300px; color: #f3f7f1; }
.taskbar { height: 40px; background: linear-gradient(90deg, #34362c, #37362c 50%, #2d3227); display: flex; align-items: center; color: #fff; font-size: 12px; }
.start { width: 48px; display: flex; justify-content: center; }
.search { width: 288px; height: 40px; box-sizing: border-box; border: 2px solid #8d8e87; background: #fff; display: flex; align-items: center; padding-left: 10px; color: #2b2b2b; font-size: 14.200px; }
.search span { margin-left: 11px; }
.sparkle { margin-left: auto; margin-right: 8px; }
.slot { width: 42px; display: flex; justify-content: center; }
.tv { width: 50px; }
.circ { margin-left: 4px; }
.i24 { width: 24px; height: 24px; }
.run { width: 77px; height: 40px; box-sizing: border-box; border-bottom: 2px solid #b4b5a8; padding: 2px 4px 0; display: flex; align-items: center; position: relative; margin-left: 4px; }
.run.first { margin-left: 5px; }
.run.second { margin-left: 8px; }
.run.third { margin-left: 9px; }
.run span { margin-left: 4px; }
.run em { position: absolute; left: 15px; top: 18px; width: 14px; height: 14px; border-radius: 50%; background: #05503f; font: 9px/14px "Open Sans", sans-serif; text-align: center; }
.weather { margin-left: 30px; display: flex; align-items: center; gap: 8px; font-size: 13.500px; width: 87px; }
.tray { display: flex; align-items: center; width: 114px; }
.meet { margin-left: 12px; }
.batt { margin-left: 10px; }
.wifi { margin-left: 11px; }
.vol { margin-left: 8px; }
.stack { display: flex; flex-direction: column; align-items: center; font-size: 11.300px; line-height: 17px; }
.lang { margin-left: 6px; }
.clock { margin-left: 13px; }
.lang, .clock { padding-bottom: 2px; }
.notif { margin-left: 17px; margin-top: 4px; }
.desk { margin-left: auto; margin-right: 4px; width: 1px; height: 40px; background: #6a6c63; }
.pp-letter { font: bold 14px "Open Sans", sans-serif; fill: #fff; }
.clap { font: bold 10.500px "Liberation Sans", sans-serif; }
.word-letter { font: bold 10px "Open Sans", sans-serif; fill: #fff; }
.badge-n { font: 9px "Open Sans", sans-serif; fill: #fff; }
.notif-n { font: 12px "Open Sans", sans-serif; fill: #fff; }
</style>
